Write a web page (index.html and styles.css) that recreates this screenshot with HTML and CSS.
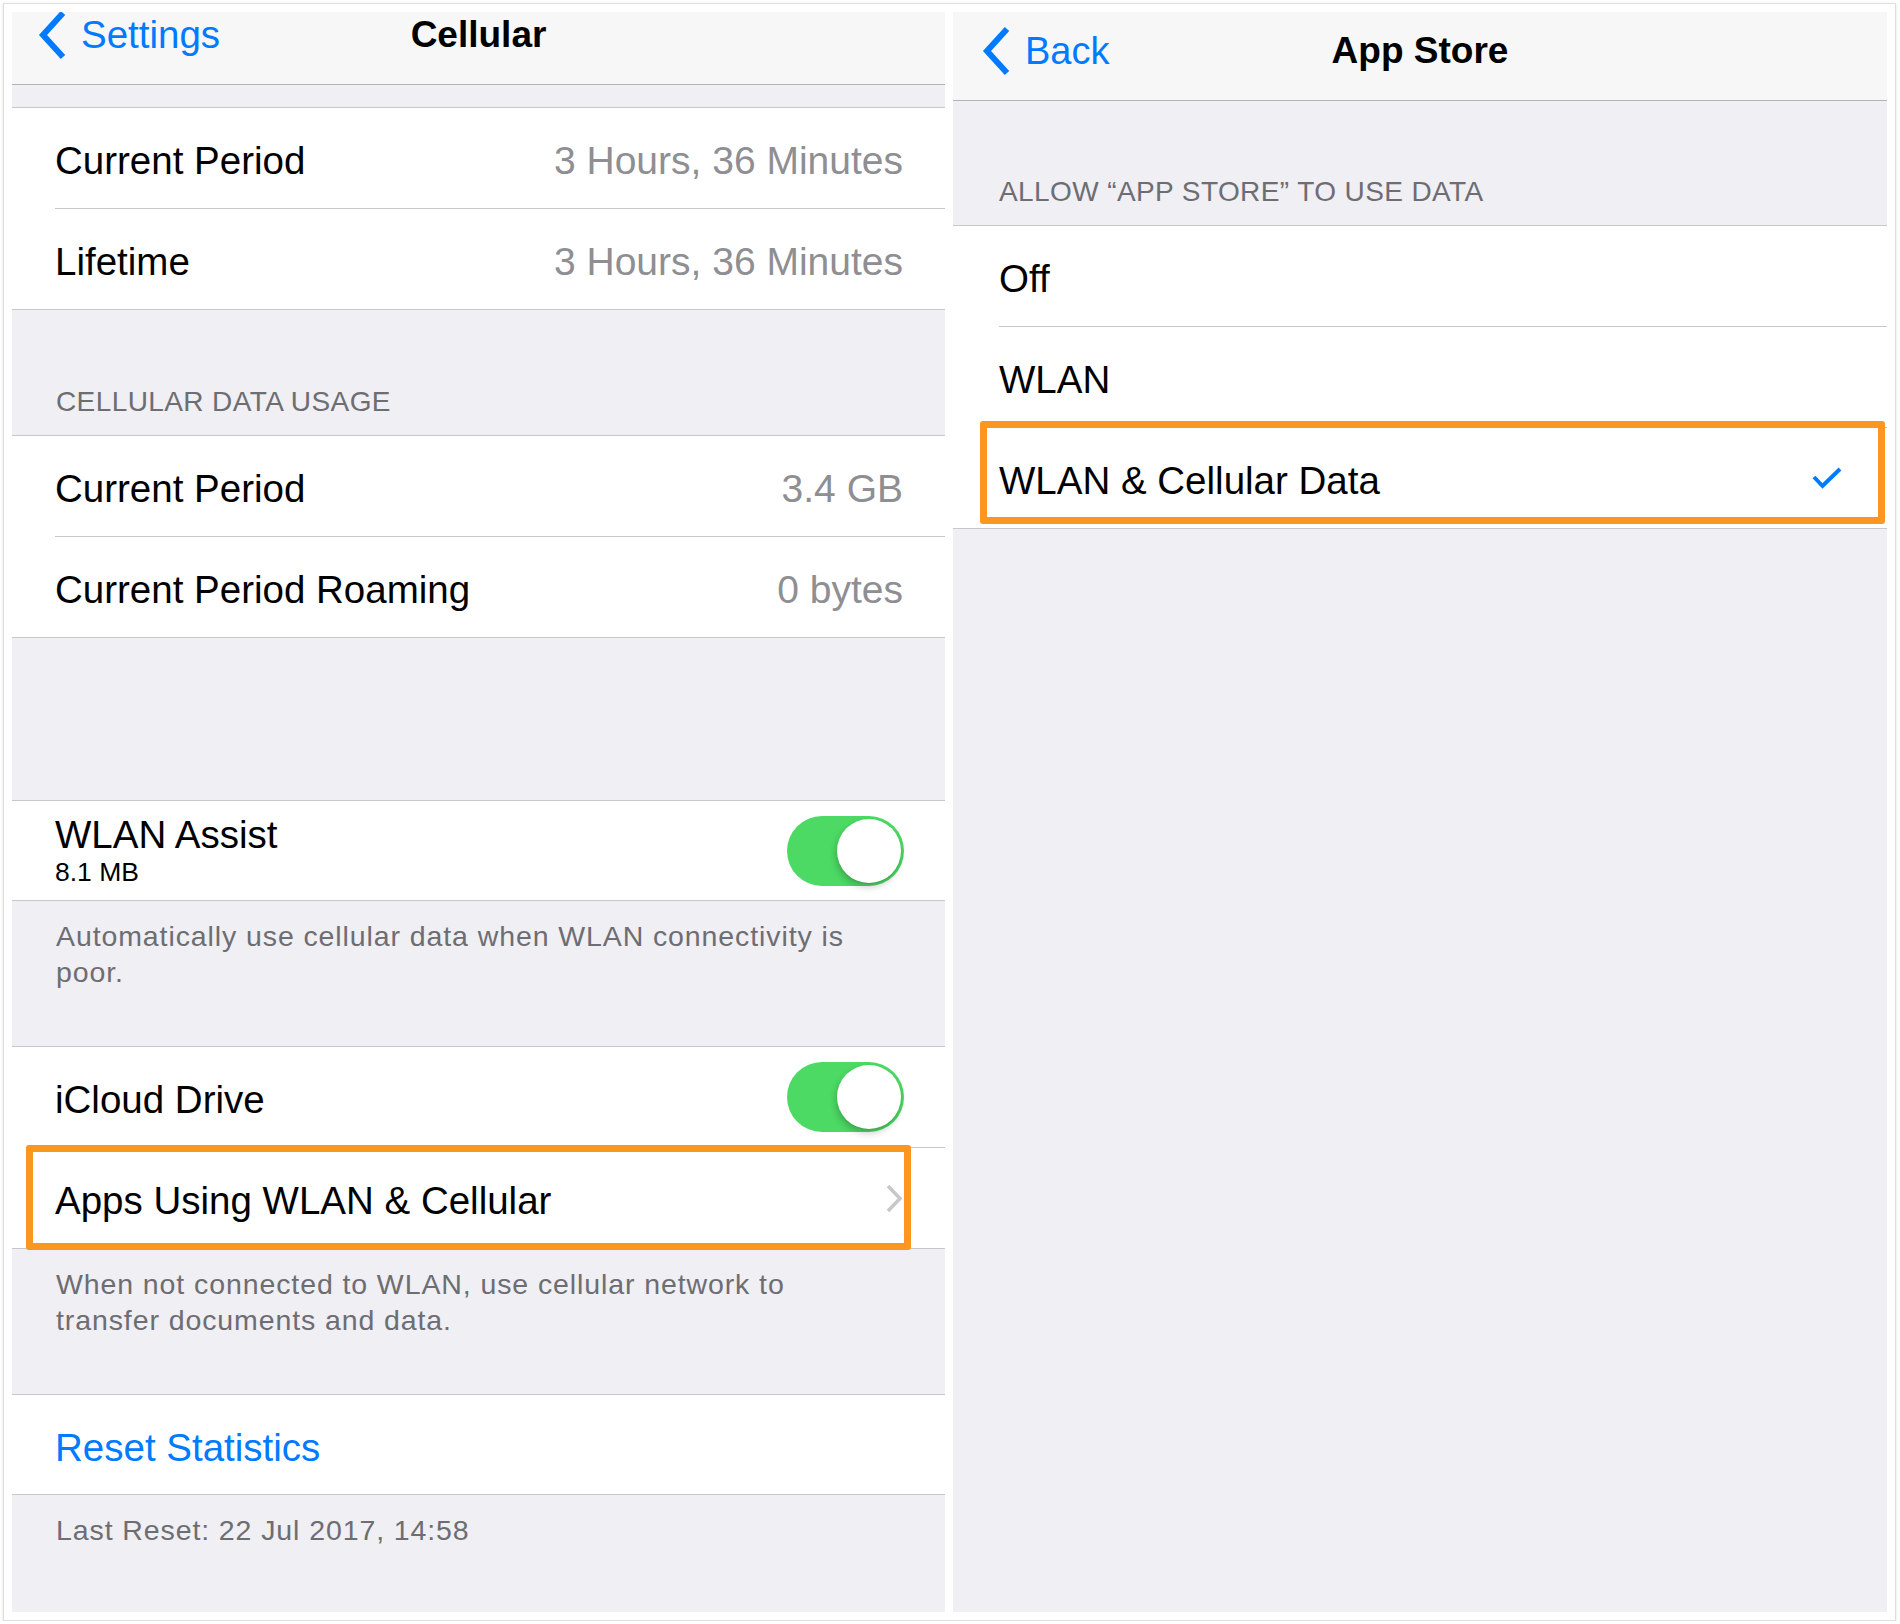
FILE: index.html
```html
<!DOCTYPE html>
<html>
	<head>
		<meta charset="utf-8" />
		<title>Cellular</title>
		<link rel="stylesheet" href="styles.css">
	</head>
	<body>
		<div class="frame">
			<!-- left screen: Cellular settings -->
			<div class="panel panel-main">
				<div class="nav nav-cropped">
					<a class="back" href="#">
						<svg class="chevron" width="30" height="50" viewBox="0 0 30 50"><polyline points="26,3 6,25 26,47" /></svg>
						<span>Settings</span>
					</a>
					<div class="title">Cellular</div>
					<div></div>
				</div>

				<div class="gap-small"></div>
				<div class="section">
					<div class="row"><span class="label">Current Period</span><span class="value">3 Hours, 36 Minutes</span></div>
					<div class="row"><span class="label">Lifetime</span><span class="value">3 Hours, 36 Minutes</span></div>
				</div>

				<div class="header">CELLULAR DATA USAGE</div>
				<div class="section">
					<div class="row"><span class="label">Current Period</span><span class="value">3.4 GB</span></div>
					<div class="row"><span class="label">Current Period Roaming</span><span class="value">0 bytes</span></div>
				</div>

				<div class="gap-large"></div>
				<div class="section">
					<div class="row row-single">
						<div class="stack">
							<span class="label label-stack">WLAN Assist</span>
							<span class="sub">8.1 MB</span>
						</div>
						<div class="toggle"><div class="knob"></div></div>
					</div>
				</div>
				<div class="footer"><p>Automatically use cellular data when WLAN connectivity is poor.</p></div>

				<div class="section">
					<div class="row">
						<span class="label">iCloud Drive</span>
						<div class="toggle"><div class="knob"></div></div>
					</div>
					<div class="row row-marked">
						<span class="label">Apps Using WLAN &amp; Cellular</span>
						<svg class="disclosure" width="17" height="29" viewBox="0 0 17 29"><polyline points="2,2 14,14.5 2,27" /></svg>
						<div class="highlight hl-apps"></div>
					</div>
				</div>
				<div class="footer"><p>When not connected to WLAN, use cellular network to transfer documents and data.</p></div>

				<div class="section">
					<div class="row row-single"><span class="label link">Reset Statistics</span></div>
				</div>
				<div class="footer"><p>Last Reset: 22 Jul 2017, 14:58</p></div>
			</div>

			<!-- right screen: App Store data choice -->
			<div class="panel panel-detail">
				<div class="nav">
					<a class="back" href="#">
						<svg class="chevron" width="30" height="50" viewBox="0 0 30 50"><polyline points="26,3 6,25 26,47" /></svg>
						<span>Back</span>
					</a>
					<div class="title">App Store</div>
					<div></div>
				</div>

				<div class="header">ALLOW “APP STORE” TO USE DATA</div>
				<div class="section">
					<div class="row"><span class="label">Off</span></div>
					<div class="row"><span class="label">WLAN</span></div>
					<div class="row row-marked">
						<span class="label">WLAN &amp; Cellular Data</span>
						<svg class="check" width="30" height="24" viewBox="0 0 30 24"><polyline points="2,11 10.5,20 28,3" /></svg>
						<div class="highlight hl-data"></div>
					</div>
				</div>
			</div>
		</div>
	</body>
</html>
```

FILE: styles.css
```css
body {
	margin: 0;
	background: #fff;
	font-family: "Liberation Sans", Arial, sans-serif;
	color: #000;
}

.frame {
	box-sizing: border-box;
	width: 1893px;
	height: 1618px;
	margin: 3px 0 0 3px;
	padding: 8px;
	border: 1px solid #dedede;
	box-shadow: 0 1px 3px rgba(0, 0, 0, 0.12);
	display: flex;
	gap: 8px;
}

.panel {
	background: #efeff4;
	overflow: hidden;
	display: flex;
	flex-direction: column;
}

.panel-main {
	width: 933px;
}

.panel-detail {
	flex: 1;
}

/* navigation bar */
.nav {
	height: 89px;
	padding-bottom: 10px;
	box-sizing: border-box;
	flex-shrink: 0;
	background: #f7f7f7;
	border-bottom: 1px solid #b4b4b8;
	display: grid;
	grid-template-columns: 1fr auto 1fr;
	align-items: center;
}

/* status bar cut away: bar sits higher */
.nav-cropped {
	height: 73px;
	padding-bottom: 0;
	align-items: start;
}

.nav-cropped .back {
	margin-top: -2px;
}

.back {
	display: flex;
	align-items: center;
	gap: 14px;
	padding-left: 25px;
	color: #007aff;
	text-decoration: none;
	font-size: 38.5px;
	line-height: 46px;
}

.panel-detail .back {
	padding-left: 28px;
	font-size: 38px;
}

.chevron polyline {
	fill: none;
	stroke: #007aff;
	stroke-width: 6;
}

.title {
	font-size: 37px;
	font-weight: bold;
	line-height: 46px;
}

/* groups */
.gap-small {
	height: 22px;
	flex-shrink: 0;
}

.gap-large {
	height: 162px;
	flex-shrink: 0;
}

.header {
	flex-shrink: 0;
	padding: 75px 0 16px 44px;
	font-size: 28px;
	line-height: 34px;
	letter-spacing: 0.4px;
	color: #6d6d72;
}

.panel-detail .header {
	padding: 74px 0 16px 46px;
}

.section {
	flex-shrink: 0;
	background: #fff;
	border-top: 1px solid #c8c7cc;
	border-bottom: 1px solid #c8c7cc;
}

.row {
	position: relative;
	height: 100px;
	margin-left: 43px;
	padding-right: 42px;
	display: flex;
	align-items: center;
	justify-content: space-between;
}

.panel-detail .row {
	margin-left: 46px;
}

.row + .row {
	border-top: 1px solid #c8c7cc;
}

.row-single {
	height: 99px;
}

.label,
.value {
	padding-top: 6px;
	font-size: 38.5px;
	line-height: 46px;
}

.value {
	font-size: 39px;
	color: #8e8e93;
}

.link {
	color: #007aff;
}

.stack {
	display: flex;
	flex-direction: column;
}

.label-stack {
	padding-top: 0;
	line-height: 42px;
}

.sub {
	font-size: 26.5px;
	line-height: 32px;
}

.footer {
	flex-shrink: 0;
	padding: 17px 0 56px 44px;
}

.footer p {
	margin: 0;
	max-width: 810px;
	font-size: 28.5px;
	line-height: 36px;
	letter-spacing: 0.9px;
	color: #6d6d72;
}

/* switch */
.toggle {
	box-sizing: border-box;
	width: 117px;
	height: 70px;
	padding: 3px;
	border-radius: 35px;
	background: #4cd964;
	display: flex;
	justify-content: flex-end;
	margin-right: -1px;
}

.knob {
	width: 64px;
	height: 64px;
	border-radius: 50%;
	background: #fff;
	box-shadow: -1px 4px 7px rgba(0, 0, 0, 0.22), 0 1px 1px rgba(0, 0, 0, 0.06);
}

.disclosure polyline {
	fill: none;
	stroke: #c7c7cc;
	stroke-width: 3.5;
}

.check {
	margin-right: 3px;
}

.check polyline {
	fill: none;
	stroke: #007aff;
	stroke-width: 4;
}

/* orange annotation boxes */
.highlight {
	position: absolute;
	border: 7px solid #fb9720;
	border-radius: 3px;
	pointer-events: none;
}

.hl-apps {
	top: -3px;
	bottom: -2px;
	left: -29px;
	right: 34px;
}

.hl-data {
	top: -7px;
	bottom: 4px;
	left: -19px;
	right: 2px;
}
```
